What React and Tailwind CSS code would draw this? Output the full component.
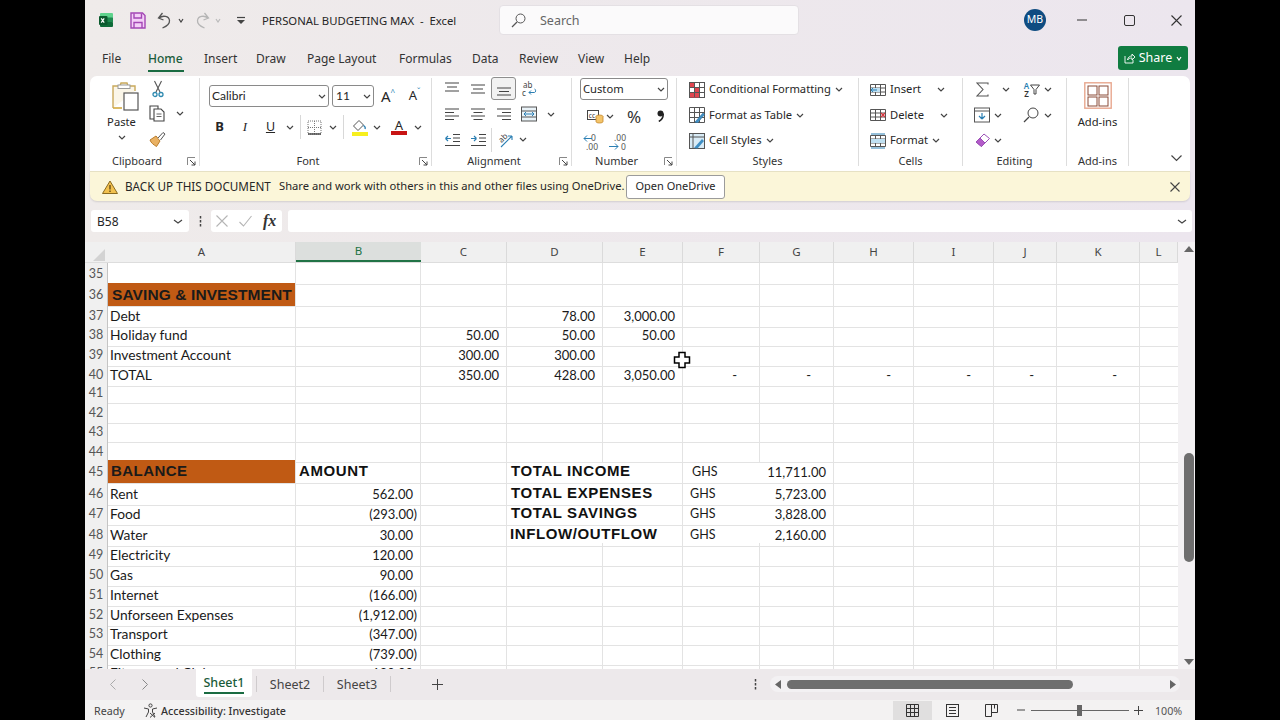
import React from "react";

const UI = "font-['Noto_Sans','Open_Sans',sans-serif]";

const Svg = ({ w = 16, h = 16, children, className = "" }) => (
  <svg width={w} height={h} viewBox={`0 0 ${w} ${h}`} fill="none" className={`shrink-0 ${className}`}>{children}</svg>
);
const Chev = ({ c = "#444", w = 8 }) => (
  <Svg w={w} h={5}><path d={`M1 1l${w / 2 - 1} 3 ${w / 2 - 1}-3`} stroke={c} strokeWidth="1.2" /></Svg>
);
const Slot = ({ w, children, className = "" }) => (
  <div className={`flex items-center justify-center shrink-0 ${w} ${className}`}>{children}</div>
);

/* ---------- title icons ---------- */
const ExcelLogo = () => (
  <Svg w={16} h={16}>
    <rect x="2" y="1" width="13" height="5" rx="1" fill="#5fd38d" />
    <rect x="2" y="5.5" width="13" height="5" fill="#1f8a50" />
    <rect x="2" y="10" width="13" height="5" rx="1" fill="#0e6b38" />
    <rect x="1" y="4" width="8.5" height="9" rx="1" fill="#0b5a2e" />
    <path d="M3.2 6.4l3 4.2M6.2 6.4l-3 4.2" stroke="#fff" strokeWidth="1.2" />
  </Svg>
);
const SaveIcon = () => (
  <Svg w={16} h={17}>
    <path d="M1 1h11.5L15 3.5V16H1z" fill="#f3cff7" stroke="#a347b5" strokeWidth="1.4" />
    <path d="M4 1.5V6h7.5V1.5M4 16v-5.5h8V16" stroke="#a347b5" strokeWidth="1.4" />
  </Svg>
);
const UndoIcon = ({ c = "#555", flip = false }) => (
  <Svg w={14} h={17} className={flip ? "-scale-x-100" : ""}>
    <path d="M5.5 1L1.5 6l5 2M2 6c4-3 10-2 10.5 2.5C12.800 12 9 14.500 5.500 16" stroke={c} strokeWidth="1.3" />
  </Svg>
);
const QatMore = () => (
  <Svg w={8} h={9}><path d="M0 1.500h8" stroke="#444" strokeWidth="1.200" /><path d="M0 4l4 4 4-4z" fill="#444" /></Svg>
);
const X = ({ s = 11, c = "#444", sw = 1.1 }) => (
  <Svg w={s} h={s}><path d={`M.5.5L${s - 0.5} ${s - 0.5}M${s - 0.5}.5L.5 ${s - 0.5}`} stroke={c} strokeWidth={sw} /></Svg>
);

/* ---------- ribbon icons ---------- */
const PasteIcon = () => (
  <Svg w={28} h={30}>
    <path d="M2 27V5h7l1-3h6l1 3h7v5" stroke="#c9a95b" strokeWidth="1.400" fill="#fbf6e8" />
    <path d="M2 27h9" stroke="#d3a93f" strokeWidth="1.600" />
    <rect x="7" y="4" width="12" height="3.500" fill="#fff" stroke="#9a9a9a" />
    <rect x="13" y="12" width="14" height="17" fill="#fff" stroke="#555" strokeWidth="1.200" />
  </Svg>
);
const Scissors = () => (
  <Svg w={12} h={18}>
    <path d="M2.500 1L8 12M9.500 1L4 12" stroke="#555" strokeWidth="1.100" />
    <circle cx="3" cy="14.500" r="2" stroke="#2f8ab0" strokeWidth="1.300" />
    <circle cx="9" cy="14.500" r="2" stroke="#2f8ab0" strokeWidth="1.300" />
  </Svg>
);
const CopyIcon = () => (
  <Svg w={17} h={17}>
    <path d="M5 14H1V1h8v3" stroke="#444" strokeWidth="1.100" />
    <path d="M5 4h7l3 3v9H5z" fill="#fff" stroke="#444" strokeWidth="1.100" />
    <path d="M7.500 9h5M7.500 11.500h5" stroke="#666" />
  </Svg>
);
const Painter = () => (
  <Svg w={17} h={16}>
    <path d="M1 9l6-4 4 5-3.500 5.500C5 14 2 12 1 9z" fill="#e9b163" stroke="#b97c2b" />
    <path d="M9 7l5-5.500 2 1.500-4.500 6" fill="#fff" stroke="#555" />
  </Svg>
);
const FillIcon = () => (
  <Svg w={17} h={17}>
    <path d="M8 1.500L2.500 7 7 11.500 12.500 6z" fill="#fff" stroke="#555" />
    <path d="M12.500 6.500c1.500 1 2 2.500 1.500 3.500" stroke="#2b7fb3" strokeWidth="1.300" />
    <rect x="1" y="13" width="16" height="4" fill="#f7ef1e" />
  </Svg>
);
const BordersIcon = () => (
  <Svg w={15} h={15}>
    <path d="M1 1h13v13H1zM7.500 1v13M1 7.500h13" stroke="#777" strokeDasharray="1 1" />
    <path d="M1 14h13" stroke="#333" strokeWidth="1.300" />
  </Svg>
);
const Lines = ({ d }) => <Svg w={16} h={16}><path d={d} stroke="#444" strokeWidth="1.200" /></Svg>;
const WrapIcon = () => (
  <Svg w={16} h={18}>
    <text x="2" y="7.500" fontSize="8" fill="#444" fontFamily="Noto Sans">ab</text>
    <text x="1" y="16" fontSize="8" fill="#444" fontFamily="Noto Sans">c</text>
    <path d="M8 12.500h5.500c1.500 0 1.500-3.500 0-3.500M8 12.500l2-2M8 12.500l2 2" stroke="#2b7fb3" />
  </Svg>
);
const MergeIcon = () => (
  <Svg w={16} h={16}>
    <rect x=".5" y="1" width="15" height="14" stroke="#555" fill="#eaf3f8" />
    <path d="M.5 5h15M.5 11h15" stroke="#555" />
    <path d="M3 8h10M3 8l2-2M3 8l2 2M13 8l-2-2M13 8l-2 2" stroke="#2b7fb3" />
  </Svg>
);
const IndentIcon = ({ rev }) => (
  <Svg w={15} h={14}>
    <path d="M8 1.500h7M8 5h7M8 8.500h7M0 12.500h15" stroke="#444" />
    <path d={rev ? "M.5 5.500h5.500M.5 5.500l2.500-2.500M.5 5.500l2.500 2.500" : "M0 5.500h5.500M5.500 5.500L3 3M5.500 5.500L3 8"} stroke="#2b7fb3" strokeWidth="1.200" />
  </Svg>
);
const OrientIcon = () => (
  <Svg w={18} h={18}>
    <text x="2" y="10" fontSize="8" fill="#444" transform="rotate(-45 6 8)" fontFamily="Noto Sans">ab</text>
    <path d="M4 16L15 5M15 5h-4M15 5v4" stroke="#2b7fb3" strokeWidth="1.100" />
  </Svg>
);
const CurrencyIcon = () => (
  <Svg w={17} h={15}>
    <rect x=".5" y="1.500" width="11" height="9" fill="#fff" stroke="#444" />
    <text x="1.800" y="8.500" fontSize="6.500" fill="#333" fontFamily="Noto Sans">cc</text>
    <ellipse cx="12.500" cy="7.500" rx="3.500" ry="1.500" fill="#f3c46a" stroke="#c4872b" strokeWidth=".8" />
    <path d="M9 7.500v5c0 2 7 2 7 0v-5" fill="#f3c46a" stroke="#c4872b" strokeWidth=".8" />
  </Svg>
);
const DecIcon = ({ kind }) => (
  <div className="relative w-[19px] h-[17px] shrink-0 text-[8.5px] leading-[8px] text-[#555] font-['Noto_Sans',sans-serif]">
    {kind === "inc" ? (
      <>
        <span className="absolute left-[8px] top-0">0</span>
        <span className="absolute left-[3px] top-[9px]">.00</span>
        <svg width="9" height="7" className="absolute left-0 top-[1px]"><path d="M9 3.500H1M1 3.500l3-3M1 3.500l3 3" stroke="#2b7fb3" fill="none" /></svg>
      </>
    ) : (
      <>
        <span className="absolute left-[5px] top-0">.00</span>
        <span className="absolute left-[12px] top-[9px]">0</span>
        <svg width="10" height="7" className="absolute left-0 top-[9px]"><path d="M0 3.500h9M9 3.500l-3-3M9 3.500l-3 3" stroke="#2b7fb3" fill="none" /></svg>
      </>
    )}
  </div>
);
const CFIcon = () => (
  <Svg w={16} h={16}>
    <rect x=".5" y=".5" width="15" height="15" fill="#fff" stroke="#555" />
    <rect x="1" y="1" width="5" height="4.500" fill="#e0454f" />
    <rect x="5.500" y="5.500" width="5" height="5" fill="#e0454f" />
    <rect x="1" y="10.500" width="9" height="5" fill="#e0454f" />
    <path d="M5.500 1v14M10.500 1v14M1 5.500h14M1 10.500h14" stroke="#555" />
  </Svg>
);
const TableIcon = () => (
  <Svg w={16} h={16}>
    <path d="M.5.500h15v15H.5zM.5 5.500h15M.5 10.500h15M5.500.5v15M10.500.5v15" stroke="#555" />
    <path d="M6 15l8-9 1.500 1.500-7 8.500z" fill="#3f8fc4" stroke="#2b6f9e" strokeWidth=".6" />
  </Svg>
);
const StylesIcon = () => (
  <Svg w={16} h={16}>
    <rect x=".5" y=".5" width="15" height="15" fill="#d8ebf6" stroke="#555" />
    <path d="M.5 4h15M4 .5v15" stroke="#555" />
    <path d="M5 15l8-9 2 2-6.500 7.500z" fill="#3f8fc4" />
  </Svg>
);
const CellGrid = ({ children }) => (
  <Svg w={16} h={16}>
    <path d="M.5 2.500h15v11H.5zM.5 6h15M.5 10h15M5.500 2.500v11M10.500 2.500v11" stroke="#555" />
    {children}
  </Svg>
);
const EraserIcon = () => (
  <Svg w={15} h={15}>
    <path d="M1 9l8-8 5.500 4.500-8 8z" fill="#fff" stroke="#9a4fb5" />
    <path d="M1 9l4-4 5 5-3.500 3.500z" fill="#b35bc9" stroke="#9a4fb5" />
  </Svg>
);
const SortIcon = () => (
  <div className="flex items-center">
    <div className="flex flex-col items-center text-[8px] leading-[8px] font-semibold w-[7px]">
      <span className="text-[#2b7fb3]">A</span>
      <span className="text-[#333]">Z</span>
    </div>
    <Svg w={10} h={11}><path d="M.5 1h9L6 5.500V10H4V5.500z" stroke="#444" /></Svg>
  </div>
);
const AddinsIcon = () => (
  <Svg w={28} h={27}>
    <rect x=".8" y=".8" width="26.400" height="25.400" stroke="#e8a78e" strokeWidth="1.400" />
    <rect x="4" y="4" width="9" height="9" stroke="#8a4a36" />
    <rect x="15" y="4" width="9" height="9" stroke="#8a4a36" />
    <rect x="4" y="15" width="9" height="9" stroke="#8a4a36" />
    <rect x="15" y="15" width="9" height="9" stroke="#8a4a36" />
  </Svg>
);
const Launcher = () => (
  <Svg w={9} h={9}>
    <path d="M.5 8V.5H8" stroke="#888" />
    <path d="M3 3l5 5M8 4.500V8H4.500" stroke="#444" />
  </Svg>
);

const Sep = () => <div className="w-px bg-[#dddddd] my-[2px] mb-[5px] shrink-0" />;

const Group = ({ w, label, launcher, children }) => (
  <div className={`flex flex-col shrink-0 ${w}`}>
    <div className="h-[75px]">{children}</div>
    <div className="h-[20px] flex items-center text-[11px] text-[#333]">
      <div className="flex-1 text-center">{label}</div>
      {launcher && <div className="w-[15px] flex justify-center"><Launcher /></div>}
    </div>
  </div>
);
const R = ({ children, className = "" }) => <div className={`h-[25.500px] flex items-center ${className}`}>{children}</div>;

const Ribbon = () => (
  <div className="mx-[5px] h-[95px] bg-white rounded-t-[7px] flex text-[#262626] text-[11.200px]">
    <Group w="w-[109px]" label="Clipboard" launcher>
      <div className="flex h-full">
        <div className="w-[63px] flex flex-col items-center pt-[5px]">
          <div className="ml-[6px]"><PasteIcon /></div>
          <div className="mt-[3px] leading-[16px]">Paste</div>
          <div className="mt-[5px]"><Chev /></div>
        </div>
        <div className="flex flex-col">
          <R><Slot w="w-[9px]"><Scissors /></Slot></R>
          <R><Slot w="w-[9px]"><CopyIcon /></Slot><Slot w="w-[36px]"><Chev /></Slot></R>
          <R><Slot w="w-[9px]"><Painter /></Slot></R>
        </div>
      </div>
    </Group>
    <Sep />
    <Group w="w-[231px]" label="Font" launcher>
      <div className="pt-[9px] pl-[9px]">
        <div className="flex items-center h-[22px]">
          <div className="w-[120px] h-[22px] border border-[#8a8a8a] rounded-[3px] flex items-center justify-between pl-[2px] pr-[2px] font-['Lato',sans-serif] text-[12px]">Calibri<Chev /></div>
          <div className="ml-[3px] w-[42px] h-[22px] border border-[#8a8a8a] rounded-[3px] flex items-center justify-between pl-[3px] pr-[2px] font-['Lato',sans-serif] text-[12px]">11<Chev /></div>
          <Slot w="w-[28px]" className="text-[15px]">A<span className="text-[8px] -mt-[8px] text-[#2b7fb3]">^</span></Slot>
          <Slot w="w-[25px]" className="text-[13px]">A<span className="text-[8px] -mt-[8px] text-[#2b7fb3]">ˇ</span></Slot>
        </div>
        <div className="flex items-center h-[24px] mt-[8px] -ml-[9px] pl-[7px]">
          <Slot w="w-[25px]" className="font-bold text-[13px]">B</Slot>
          <Slot w="w-[26px]" className="italic text-[13px] font-['Liberation_Serif',serif]">I</Slot>
          <Slot w="w-[25px]"><span className="underline text-[12.500px]">U</span></Slot>
          <Slot w="w-[13px]"><Chev /></Slot>
          <div className="w-px h-[24px] bg-[#d8d8d8] ml-[4px]" />
          <Slot w="w-[27px]"><BordersIcon /></Slot>
          <Slot w="w-[9px]"><Chev /></Slot>
          <div className="w-px h-[24px] bg-[#d8d8d8] ml-[6px]" />
          <Slot w="w-[30px]"><FillIcon /></Slot>
          <Slot w="w-[6px]"><Chev /></Slot>
          <Slot w="w-[38px]">
            <div className="flex flex-col items-center leading-[12px] text-[13px]">A<div className="w-[16px] h-[4px] bg-[#c81414]" /></div>
          </Slot>
          <Slot w="w-[0px]"><Chev /></Slot>
        </div>
      </div>
    </Group>
    <Sep />
    <Group w="w-[139px]" label="Alignment" launcher>
      <div className="pl-[7px]">
        <R>
          <Slot w="w-[26px]"><Lines d="M1 2h14M3 6h10M1 10h14" /></Slot>
          <Slot w="w-[26px]"><Lines d="M1 4h14M3 8h10M1 12h14" /></Slot>
          <Slot w="w-[25px]" className="h-[23px] border border-[#8e8e8e] rounded-[3px] bg-[#f2f2f2]"><Lines d="M1 7h14M3 10.500h10M1 14h14" /></Slot>
          <Slot w="w-[26px]"><WrapIcon /></Slot>
        </R>
        <R>
          <Slot w="w-[26px]"><Lines d="M1 3h14M1 6.500h9M1 10h14M1 13.500h9" /></Slot>
          <Slot w="w-[26px]"><Lines d="M1 3h14M3.500 6.500h9M1 10h14M3.500 13.500h9" /></Slot>
          <Slot w="w-[25px]"><Lines d="M1 3h14M6 6.500h9M1 10h14M6 13.500h9" /></Slot>
          <Slot w="w-[26px]"><MergeIcon /></Slot>
          <Slot w="w-[18px]"><Chev /></Slot>
        </R>
        <R>
          <Slot w="w-[26px]"><IndentIcon rev /></Slot>
          <Slot w="w-[26px]"><IndentIcon /></Slot>
          <div className="w-px h-[24px] bg-[#d8d8d8]" />
          <Slot w="w-[27px]"><OrientIcon /></Slot>
          <Slot w="w-[8px]"><Chev /></Slot>
        </R>
      </div>
    </Group>
    <Sep />
    <Group w="w-[104px]" label="Number" launcher>
      <div className="pl-[8px] pt-[2px]">
        <div className="w-[88px] h-[22px] border border-[#8a8a8a] rounded-[3px] flex items-center justify-between pl-[2px] pr-[2px]">Custom<Chev /></div>
        <div className="flex items-center h-[24px] mt-[4px]">
          <Slot w="w-[30px]"><CurrencyIcon /></Slot>
          <Slot w="w-[0px]"><Chev /></Slot>
          <Slot w="w-[48px]" className="text-[17px] leading-none text-[#333]">%</Slot>
          <Slot w="w-[4px]">
            <Svg w={7} h={12}><circle cx="3.500" cy="3.500" r="3" fill="#222" /><path d="M6.200 3.500C6.500 7 4.500 10 1.800 11.500" stroke="#222" strokeWidth="1.500" /></Svg>
          </Slot>
        </div>
        <div className="flex items-center h-[24px] mt-[2px] pl-[3px] gap-[7px]">
          <DecIcon kind="inc" /><DecIcon kind="dec" />
        </div>
      </div>
    </Group>
    <Sep />
    <Group w="w-[181px]" label="Styles">
      <div className="pl-[12px] pt-[1px]">
        <R className="gap-[4px]"><CFIcon /><span>Conditional Formatting</span><Chev /></R>
        <R className="gap-[4px]"><TableIcon /><span>Format as Table</span><Chev /></R>
        <R className="gap-[4px]"><StylesIcon /><span>Cell Styles</span><Chev /></R>
      </div>
    </Group>
    <Sep />
    <Group w="w-[103px]" label="Cells">
      <div className="pl-[11px] pt-[1px]">
        <R className="gap-[4px]">
          <CellGrid><rect x="1" y="6" width="9" height="4" fill="#bfe0f2" /><path d="M1 8h6M1 8l2-2M1 8l2 2" stroke="#2b7fb3" /></CellGrid>
          <span>Insert</span><div className="ml-[12px]"><Chev /></div>
        </R>
        <R className="gap-[4px]">
          <CellGrid><path d="M11 6l4 4M15 6l-4 4" stroke="#d9363e" strokeWidth="1.300" /></CellGrid>
          <span>Delete</span><div className="ml-[12px]"><Chev /></div>
        </R>
        <R className="gap-[4px]">
          <CellGrid><rect x="1" y="6" width="14" height="4" fill="#bfe0f2" /><path d="M1 1h14M1 15h14" stroke="#2b7fb3" /></CellGrid>
          <span>Format</span><Chev />
        </R>
      </div>
    </Group>
    <Sep />
    <Group w="w-[103px]" label="Editing">
      <div className="pl-[11px] pt-[1px]">
        <R>
          <Slot w="w-[16px]"><Svg w={13} h={15}><path d="M12 2.500V1H1l6 6.500L1 14h11v-1.500" stroke="#555" strokeWidth="1.100" /></Svg></Slot>
          <Slot w="w-[29px]" className="pl-[3px]"><Chev /></Slot>
          <Slot w="w-[19px]" className="ml-[3px]"><SortIcon /></Slot>
          <Slot w="w-[14px]"><Chev /></Slot>
        </R>
        <R>
          <Slot w="w-[16px]"><Svg w={16} h={16}><rect x=".5" y="1" width="15" height="14" stroke="#555" /><path d="M.5 4h15" stroke="#555" /><path d="M8 6v6M8 12l-3-3M8 12l3-3" stroke="#2b7fb3" strokeWidth="1.200" /></Svg></Slot>
          <Slot w="w-[13px]" className="pl-[3px]"><Chev /></Slot>
          <Slot w="w-[22px]" className="ml-[17px]"><Svg w={16} h={16}><circle cx="10" cy="6" r="5" stroke="#444" /><path d="M6 10l-5 5" stroke="#444" strokeWidth="1.300" /></Svg></Slot>
          <Slot w="w-[10px]" className="pl-[2px]"><Chev /></Slot>
        </R>
        <R>
          <Slot w="w-[16px]"><EraserIcon /></Slot>
          <Slot w="w-[13px]" className="pl-[3px]"><Chev /></Slot>
        </R>
      </div>
    </Group>
    <Sep />
    <Group w="w-[61px]" label="Add-ins">
      <div className="flex flex-col items-center pt-[6px]">
        <AddinsIcon />
        <div className="mt-[5px] leading-[16px]">Add-ins</div>
      </div>
    </Group>
    <Sep />
    <div className="flex-1 flex items-end justify-center pb-[9px] pl-[36px] pr-[2px]">
      <Svg w={11} h={7}><path d="M.5.500L5.500 5.500 10.500.5" stroke="#444" strokeWidth="1.200" /></Svg>
    </div>
  </div>
);

/* ---------- sheet ---------- */
const COLS = "grid grid-cols-[23px_188px_125px_86px_96px_80px_77px_74px_80px_80px_63px_83px_38px]";
const LETTERS = ["A", "B", "C", "D", "E", "F", "G", "H", "I", "J", "K", "L"];

const T = (s) => ({ s, k: "pl-[2px] pt-[2px] justify-start text-[13.800px]" });
const N = (s) => ({ s, k: "pr-[7px] pt-[2px] justify-end" });
const P = (s) => ({ s, k: "pr-[3px] pt-[2px] justify-end" });
const D = { s: "-", k: "pr-[22px] pt-[2px] justify-end" };
const G = (s, k) => ({ s, k: `${k} pt-[2px] justify-start text-[12.500px]` });
const H = (s, k = "pl-[4px] justify-start") => ({ s, k: `${k} font-['Liberation_Sans',sans-serif] font-bold text-[15px] tracking-[0.6px] text-[#111]` });

const rows = [
  { n: 35, h: "h-[20px]" },
  { n: 36, h: "h-[21px]", c: { A: { s: "SAVING & INVESTMENT", k: "pl-[4px] justify-start bg-[#c05a14] font-['Liberation_Sans',sans-serif] font-bold text-[15.500px] text-[#1a1a1a] tracking-[0.1px]" } } },
  { n: 37, h: "h-[19px]", c: { A: T("Debt"), D: N("78.00"), E: N("3,000.00") } },
  { n: 38, h: "h-[20px]", c: { A: T("Holiday fund"), C: N("50.00"), D: N("50.00"), E: N("50.00") } },
  { n: 39, h: "h-[20px]", c: { A: T("Investment Account"), C: N("300.00"), D: N("300.00") } },
  { n: 40, h: "h-[19px]", c: { A: T("TOTAL"), C: N("350.00"), D: N("428.00"), E: N("3,050.00"), F: D, G: D, H: D, I: D, J: D, K: D } },
  { n: 41, h: "h-[20px]" },
  { n: 42, h: "h-[19px]" },
  { n: 43, h: "h-[20px]" },
  { n: 44, h: "h-[19px]" },
  { n: 45, h: "h-[22px]", sum: true, c: { A: { s: "BALANCE", k: "pl-[3px] justify-start bg-[#c05a14] font-['Liberation_Sans',sans-serif] font-bold text-[15px] text-[#1a1a1a] tracking-[0.45px]" }, B: H("AMOUNT", "pl-[3px] justify-start"), D: H("TOTAL INCOME"), F: G("GHS", "pl-[9px]"), G: N("11,711.00") } },
  { n: 46, h: "h-[20px]", sum: true, c: { A: T("Rent"), B: N("562.00"), D: H("TOTAL EXPENSES"), F: G("GHS", "pl-[7px]"), G: N("5,723.00") } },
  { n: 47, h: "h-[21px]", sum: true, c: { A: T("Food"), B: P("(293.00)"), D: H("TOTAL SAVINGS"), F: G("GHS", "pl-[7px]"), G: N("3,828.00") } },
  { n: 48, h: "h-[20px]", sum: true, c: { A: T("Water"), B: N("30.00"), D: H("INFLOW/OUTFLOW", "pl-[3px] justify-start"), F: G("GHS", "pl-[7px]"), G: N("2,160.00") } },
  { n: 49, h: "h-[20px]", c: { A: T("Electricity"), B: N("120.00") } },
  { n: 50, h: "h-[20px]", c: { A: T("Gas"), B: N("90.00") } },
  { n: 51, h: "h-[20px]", c: { A: T("Internet"), B: P("(166.00)") } },
  { n: 52, h: "h-[19px]", c: { A: T("Unforseen Expenses"), B: P("(1,912.00)") } },
  { n: 53, h: "h-[20px]", c: { A: T("Transport"), B: P("(347.00)") } },
  { n: 54, h: "h-[19px]", c: { A: T("Clothing"), B: P("(739.00)") } },
  { n: 55, h: "h-[20px]", c: { A: T("Fitness and Clubs"), B: N("180.00") } },
];

const Cell = ({ col, row }) => {
  const cell = row.c && row.c[col];
  const noRight = row.sum && (col === "D" || col === "F");
  const last = col === "L";
  return (
    <div className={`flex items-center whitespace-nowrap border-b border-[#e3e3e3] ${noRight || last ? "" : "border-r"} ${cell ? cell.k : ""}`}>
      {cell ? cell.s : null}
    </div>
  );
};

const Sheet = () => (
  <div className="relative h-[427px] flex bg-white overflow-hidden">
    <div className="w-[1093px] shrink-0 flex flex-col overflow-hidden">
      <div className={`${COLS} h-[20px] bg-[#f0f0f0] text-[11.500px] text-[#444] ${UI} shrink-0`}>
        <div className="flex items-end justify-end pr-[3px] pb-[1px]">
          <Svg w={12} h={12}><path d="M12 0v12H0z" fill="#d3d3d3" /></Svg>
        </div>
        {LETTERS.map((l) =>
          l === "B" ? (
            <div key={l} className="flex items-center justify-center bg-[#dcdfdd] border-b-2 border-[#217346] text-[#217346]">{l}</div>
          ) : (
            <div key={l} className="flex items-center justify-center border-r border-[#dadada]">{l}</div>
          )
        )}
      </div>
      <div className="h-[1px] bg-[#dddddd] shrink-0" />
      <div className="font-['Lato',sans-serif] text-[13px] text-[#1a1a1a] flex-1 overflow-hidden">
        {rows.map((row) => (
          <div key={row.n} className={`${COLS} ${row.h}`}>
            <div className="bg-[#f0f0f0] border-r border-b border-r-[#c4c4c4] border-b-[#dddddd] flex items-center justify-center pt-[2px] text-[12.500px] text-[#555]">{row.n}</div>
            {LETTERS.map((col) => <Cell key={col} col={col} row={row} />)}
          </div>
        ))}
      </div>
    </div>
    <div className="flex-1 bg-[#f3f1f3] flex flex-col items-center pl-[5px]">
      <div className="h-[14px] flex items-center"><Svg w={10} h={6}><path d="M5 0l5 6H0z" fill="#666" /></Svg></div>
      <div className="h-[197px]" />
      <div className="w-[10px] h-[109px] rounded-[5px] bg-[#6e6e6e]" />
      <div className="flex-1" />
      <div className="h-[14px] flex items-center"><Svg w={10} h={6}><path d="M5 6l5-6H0z" fill="#666" /></Svg></div>
    </div>
    <svg width="20" height="20" viewBox="0 0 20 20" className="absolute left-[587px] top-[108px]">
      <path d="M7 2.500h6v4.500h4.500v6H13v4.500H7V13H2.500V7H7z" fill="#fff" stroke="#000" strokeWidth="1.500" />
    </svg>
  </div>
);

export default function App() {
  return (
    <div className={`w-[1280px] h-[720px] bg-black flex justify-center overflow-hidden ${UI}`}>
      <div className="w-[1110px] h-full flex flex-col bg-gradient-to-r from-[#efebea] to-[#ece6ee] text-[#262626]">
        {/* title bar */}
        <div className="h-[40px] flex items-center shrink-0">
          <Slot w="w-[40px]" className="pl-[2px]"><ExcelLogo /></Slot>
          <Slot w="w-[25px]"><SaveIcon /></Slot>
          <Slot w="w-[26px]" className="ml-[1px]"><UndoIcon /></Slot>
          <Slot w="w-[8px]"><Chev c="#444" w={6} /></Slot>
          <Slot w="w-[24px]" className="ml-[6px]"><UndoIcon c="#b5b5b5" flip /></Slot>
          <Slot w="w-[6px]"><Chev c="#bbb" w={6} /></Slot>
          <Slot w="w-[27px]" className="ml-[6px]"><QatMore /></Slot>
          <div className="ml-[8px] w-[237px] pt-[2px] text-[11.300px] whitespace-pre">PERSONAL BUDGETING MAX  -  Excel</div>
          <div className="w-[300px] h-[30px] bg-[#fbfafb] border border-[#e4e0e4] rounded-[4px] flex items-center pl-[11px] gap-[14px] text-[12.500px] text-[#666]">
            <Svg w={15} h={15}><circle cx="9.500" cy="5.500" r="4.500" stroke="#555" /><path d="M6 9l-5 5" stroke="#555" strokeWidth="1.200" /></Svg>
            <span className="pt-[2px]">Search</span>
          </div>
          <div className="flex-1" />
          <div className="w-[22px] h-[22px] rounded-full bg-[#0f4c81] text-white text-[10.500px] flex items-center justify-center">MB</div>
          <Slot w="w-[47px]" className="ml-[12px]"><Svg w={10} h={2}><path d="M0 1h10" stroke="#333" /></Svg></Slot>
          <Slot w="w-[48px]"><Svg w={11} h={11}><rect x=".5" y=".5" width="10" height="10" rx="1.500" stroke="#333" /></Svg></Slot>
          <Slot w="w-[47px]" className="-mr-[5px]"><X s={11} c="#333" /></Slot>
        </div>
        {/* tabs */}
        <div className="h-[36px] flex items-center text-[12px] text-[#333] shrink-0 pl-[17px]">
          <div className="flex items-center mt-[2px]">
            <span className="w-[46px]">File</span>
            <span className="w-[56px] relative font-medium text-[#1a5c3a]">Home<span className="absolute left-0 w-[36px] -bottom-[4px] h-[2px] bg-[#1a6b42]" /></span>
            <span className="w-[52px]">Insert</span>
            <span className="w-[51px]">Draw</span>
            <span className="w-[92px]">Page Layout</span>
            <span className="w-[73px]">Formulas</span>
            <span className="w-[47px]">Data</span>
            <span className="w-[59px]">Review</span>
            <span className="w-[46px]">View</span>
            <span>Help</span>
          </div>
          <div className="flex-1" />
          <div className="mr-[7px] w-[70px] h-[24px] rounded-[3px] bg-[#107c41] text-white text-[12.500px] flex items-center justify-center gap-[4px]">
            <Svg w={11} h={11}><path d="M1 3v7h8V7M3.500 7C4 4 6 3 8 3V1l3 3-3 3V5C6 5 4.500 5.500 3.500 7z" stroke="#fff" strokeWidth=".9" /></Svg>
            <span className="pt-[1px]">Share</span>
            <Chev c="#fff" w={6} />
          </div>
        </div>
        <Ribbon />
        {/* message bar */}
        <div className="mx-[5px] h-[30px] bg-[#fbf6d9] rounded-b-[7px] border-t border-[#e6e1c4] flex items-center pl-[12px] pr-[10px] text-[11.200px] text-[#262626] whitespace-nowrap shrink-0 shadow-[0_1px_2px_rgba(0,0,0,0.12)]">
          <Svg w={16} h={14}><path d="M8 1l7.500 12.500H.5z" fill="#f2c14e" stroke="#8a6a20" /><path d="M8 5v4.500M8 10.500v1.500" stroke="#5a4312" strokeWidth="1.300" /></Svg>
          <span className="ml-[7px] w-[154px] text-[11.700px]">BACK UP THIS DOCUMENT</span>
          <span className="w-[347px]">Share and work with others in this and other files using OneDrive.</span>
          <button className="w-[99px] h-[24px] bg-white border border-[#9b9b9b] rounded-[3px] text-[11px]">Open OneDrive</button>
          <div className="flex-1" />
          <X s={10} />
        </div>
        {/* formula bar */}
        <div className="h-[22px] mt-[9px] flex items-center shrink-0">
          <div className="ml-[6px] w-[98px] h-[22px] bg-white rounded-[3px] flex items-center justify-between pl-[6px] pr-[6px] text-[12px]"><span className="pt-[1px]">B58</span><Chev w={10} /></div>
          <Slot w="w-[22px]"><Svg w={3} h={11}><path d="M1.500 0v2.500M1.500 4v2.500M1.500 8v2.500" stroke="#444" strokeWidth="1.500" /></Svg></Slot>
          <div className="w-[71px] h-[22px] bg-white rounded-[3px] flex items-center pl-[5px] gap-[11px]">
            <X s={12} c="#b5b5b5" />
            <Svg w={13} h={12}><path d="M.5 7l4 4 8-10" stroke="#b5b5b5" strokeWidth="1.100" /></Svg>
            <span className="font-['Liberation_Serif',serif] italic text-[16px] font-semibold leading-none text-[#333]">fx</span>
          </div>
          <div className="ml-[6px] flex-1 h-[22px] bg-white rounded-[3px] mr-[3px] flex items-center justify-end pr-[5px]"><Chev w={10} /></div>
        </div>
        <div className="h-[10px] shrink-0" />
        <Sheet />
        {/* sheet tabs */}
        <div className="h-[31px] flex items-start shrink-0 bg-[#ede9eb] text-[12.500px] text-[#444]">
          <Slot w="w-[32px]" className="ml-[12px] h-[30px]"><Svg w={6} h={11}><path d="M5.500 .5L.5 5.500l5 5" stroke="#aaa" /></Svg></Slot>
          <Slot w="w-[32px]" className="h-[30px]"><Svg w={6} h={11}><path d="M.5 .5l5 5-5 5" stroke="#888" /></Svg></Slot>
          <div className="ml-[35px] w-[56px] h-[28px] bg-white rounded-b-[3px] flex items-center justify-center font-medium text-[#1a5c3a] relative">
            Sheet1
            <span className="absolute left-[8px] right-[8px] bottom-[3px] h-[2px] bg-[#1a6b42]" />
          </div>
          <div className="w-px h-[16px] bg-[#cfcbcd] mt-[7px] ml-[4px]" />
          <Slot w="w-[66px]" className="h-[32px]">Sheet2</Slot>
          <div className="w-px h-[16px] bg-[#cfcbcd] mt-[7px]" />
          <Slot w="w-[66px]" className="h-[32px]">Sheet3</Slot>
          <div className="w-px h-[16px] bg-[#cfcbcd] mt-[7px]" />
          <Slot w="w-[92px]" className="h-[30px]"><Svg w={11} h={11}><path d="M5.500 0v11M0 5.500h11" stroke="#444" /></Svg></Slot>
          <div className="flex-1" />
          <Slot w="w-[20px]" className="h-[30px]"><Svg w={3} h={11}><path d="M1.500 0v2.500M1.500 4v2.500M1.500 8v2.500" stroke="#444" strokeWidth="1.500" /></Svg></Slot>
          <div className="ml-[5px] mr-[15px] mt-[7px] w-[410px] h-[16px] rounded-[8px] bg-[#f3f1f3] flex items-center pl-[5px] pr-[4px] gap-[3px]">
            <Svg w={6} h={9}><path d="M0 4.500L6 0v9z" fill="#666" /></Svg>
            <div className="w-[286px] h-[9px] rounded-[5px] bg-[#6e6e6e] ml-[3px]" />
            <div className="flex-1" />
            <Svg w={6} h={9}><path d="M6 4.500L0 0v9z" fill="#666" /></Svg>
          </div>
        </div>
        {/* status bar */}
        <div className="flex-1 bg-[#f3f2f2] flex items-center text-[10.700px] text-[#444]">
          <span className="ml-[9px] w-[49px] pt-[2px]">Ready</span>
          <Svg w={15} h={15}>
            <circle cx="7.500" cy="2.500" r="1.600" stroke="#444" />
            <path d="M1 5l4.500 1v3L3 14M14 5l-4.500 1v3l2.500 5" stroke="#444" />
            <path d="M7 10l5 4.500M12 10l-5 4.500" stroke="#444" />
          </Svg>
          <span className="ml-[3px] pt-[2px] font-medium text-[#333]">Accessibility: Investigate</span>
          <div className="flex-1" />
          <Slot w="w-[39px]" className="h-[19px] bg-[#e0dfdf]">
            <Svg w={13} h={13}><path d="M.5.5h12v12H.5zM4.500.5v12M8.500.5v12M.5 4.500h12M.5 8.500h12" stroke="#333" /></Svg>
          </Slot>
          <Slot w="w-[40px]">
            <Svg w={13} h={13}><rect x=".5" y=".5" width="12" height="12" stroke="#333" /><path d="M3 3.500h7M3 6.500h7M3 9.500h7" stroke="#333" /></Svg>
          </Slot>
          <Slot w="w-[39px]">
            <Svg w={13} h={13}><path d="M.5.5h12v8h-6M.5.5v12h6V.5" stroke="#333" /><path d="M9.500.5v4" stroke="#333" /></Svg>
          </Slot>
          <Slot w="w-[20px]"><Svg w={8} h={2}><path d="M0 1h8" stroke="#444" /></Svg></Slot>
          <div className="w-[98px] h-[1px] bg-[#666] relative mr-[1px]">
            <div className="absolute left-[46px] -top-[5px] w-[5px] h-[11px] bg-[#666]" />
          </div>
          <Slot w="w-[16px]"><Svg w={9} h={9}><path d="M4.500 0v9M0 4.500h9" stroke="#444" /></Svg></Slot>
          <div className="w-[49px] pl-[9px] pt-[2px] text-[#555]">100%</div>
        </div>
      </div>
    </div>
  );
}
